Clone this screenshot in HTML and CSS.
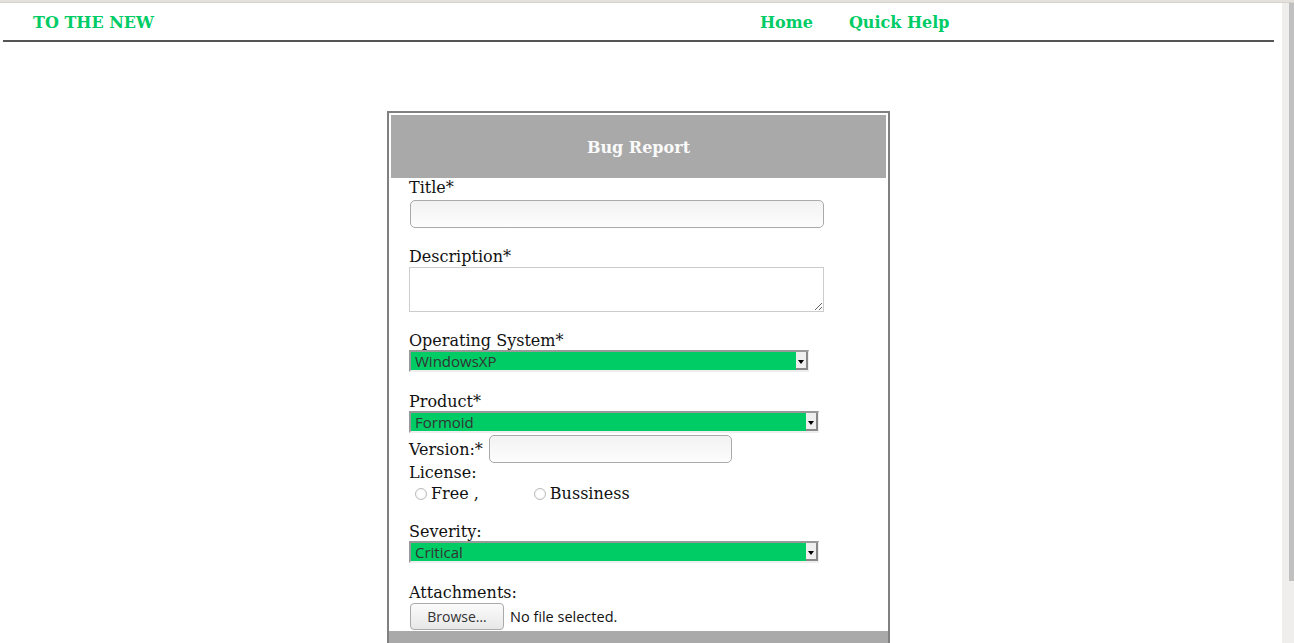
FILE: index.html
```html
<!DOCTYPE html>
<html lang="en">
<head>
<meta charset="utf-8">
<title>Bug Report</title>
<link rel="stylesheet" href="styles.css">
</head>
<body>
<div class="chrome-top"></div>
<div class="viewport">
  <div class="page">
    <header class="topbar">
      <a class="brand" href="#">TO THE NEW</a>
      <nav class="nav">
        <a href="#">Home</a>
        <a href="#">Quick Help</a>
      </nav>
    </header>
    <main class="main">
      <form class="card">
        <h2 class="card-title">Bug Report</h2>
        <div class="card-body">
          <div class="group first">
            <label class="label">Title*</label>
            <input class="text-input title-input" type="text">
          </div>
          <div class="group">
            <label class="label">Description*</label>
            <textarea class="textarea"></textarea>
          </div>
          <div class="group">
            <label class="label">Operating System*</label>
            <div class="select narrow"><span class="select-value">WindowsXP</span><span class="select-arrow"></span></div>
          </div>
          <div class="group wide-gap">
            <label class="label">Product*</label>
            <div class="select"><span class="select-value">Formoid</span><span class="select-arrow"></span></div>
            <div class="version-row">
              <label class="label inline">Version:*</label>
              <input class="text-input version-input" type="text">
            </div>
            <label class="label">License:</label>
            <div class="radio-row">
              <input class="radio" type="radio" name="lic"><span class="radio-text">Free ,</span>
              <input class="radio second" type="radio" name="lic"><span class="radio-text">Bussiness</span>
            </div>
          </div>
          <div class="group">
            <label class="label">Severity:</label>
            <div class="select"><span class="select-value">Critical</span><span class="select-arrow"></span></div>
          </div>
          <div class="group wide-gap">
            <label class="label">Attachments:</label>
            <div class="file-row">
              <button class="browse" type="button">Browse…</button>
              <span class="file-text">No file selected.</span>
            </div>
          </div>
        </div>
        <div class="card-foot"></div>
      </form>
    </main>
  </div>
  <div class="scrollbar"><div class="thumb"></div></div>
</div>
</body>
</html>
```

FILE: styles.css
```css
* { box-sizing: border-box; }
html, body {
  margin: 0;
  padding: 0;
  height: 643px;
  overflow: hidden;
  background: #fff;
  font-family: "DejaVu Serif", serif;
  font-size: 16px;
  color: #111;
}
.chrome-top {
  height: 3px;
  background: #e4e1dd;
  border-bottom: 1px solid #d6d3cf;
}
.viewport {
  display: flex;
  height: 640px;
}
.page {
  flex: 0 0 1282px;
  overflow: hidden;
}
.scrollbar {
  flex: 0 0 12px;
  background: #f0eeec;
  display: flex;
  justify-content: flex-end;
}
.thumb {
  width: 5px;
  height: 578px;
  background: #c0c0c0;
}
.topbar {
  margin-left: 3px;
  width: 1271px;
  height: 39px;
  padding-top: 2px;
  border-bottom: 2px solid #555;
  display: flex;
  align-items: center;
}
.brand {
  flex: 0 0 758px;
  padding-left: 30px;
  color: #00cc66;
  font-weight: bold;
  font-size: 16px;
  text-decoration: none;
}
.nav {
  display: flex;
  gap: 36px;
  margin-left: -1px;
}
.nav a {
  color: #00cc66;
  font-weight: bold;
  font-size: 16px;
  text-decoration: none;
}
.main {
  margin-left: 3px;
  width: 1271px;
  padding-top: 69px;
}
.card {
  display: block;
  margin: 0 auto;
  width: 503px;
  border: 2px solid #808080;
  border-bottom: none;
}
.card-title {
  margin: 2px 2px 0;
  height: 63px;
  line-height: 63px;
  padding-top: 1px;
  background: #a9a9a9;
  color: #fafafa;
  text-align: center;
  font-size: 16px;
  font-weight: bold;
}
.card-body {
  padding: 0 20px 1px;
}
.group { margin-top: 19px; }
.group.wide-gap { margin-top: 20px; }
.group.first { margin-top: 0; }
.label {
  display: block;
  line-height: 19px;
  height: 19px;
}
.label.inline { display: inline-block; }
.text-input {
  display: block;
  border: 1px solid #aaa;
  border-radius: 5px;
  background: linear-gradient(to bottom, #f2f2f2, #fdfdfd);
  height: 28px;
  margin: 0;
}
.title-input {
  width: 414px;
  margin: 3px 0 0 1px;
}
.textarea {
  display: block;
  width: 415px;
  height: 45px;
  margin: 1px 0 0;
  border: 1px solid #ccc;
  border-radius: 0;
  background: #fff;
}
.select {
  display: flex;
  width: 410px;
  height: 22px;
  border-style: solid;
  border-width: 2px 1px 2px 2px;
  border-color: #999 #eee #eee #999;
}
.select.narrow { width: 400px; }
.select-value {
  flex: 1;
  background: #00cc66;
  color: #333;
  font-family: "Open Sans", "DejaVu Sans", sans-serif;
  font-size: 15px;
  line-height: 19px;
  padding-left: 4px;
}
.select-arrow {
  flex: 0 0 12px;
  background: #eeeeee;
  border-right: 2px solid #888;
  border-bottom: 2px solid #888;
  display: flex;
  align-items: center;
  justify-content: center;
}
.select-arrow::after {
  content: "";
  border-left: 3px solid transparent;
  border-right: 3px solid transparent;
  border-top: 4px solid #000;
  margin-top: 3px;
}
.version-row {
  display: flex;
  align-items: center;
  gap: 6px;
  margin-top: 2px;
  height: 28px;
}
.version-input {
  width: 243px;
}
.radio-row {
  display: flex;
  align-items: center;
  margin-top: 2px;
  height: 19px;
}
.radio {
  appearance: none;
  -webkit-appearance: none;
  width: 12px;
  height: 12px;
  margin: 0 4px 0 6px;
  border: 1px solid #bbb;
  border-radius: 50%;
  background: radial-gradient(circle, #fff 40%, #f0f0f0 100%);
}
.radio.second { margin-left: 55px; }
.file-row {
  display: flex;
  align-items: center;
  margin-top: 1px;
  height: 27px;
}
.browse {
  width: 94px;
  height: 27px;
  margin-left: 1px;
  border: 1px solid #aaa;
  border-radius: 4px;
  background: linear-gradient(to bottom, #fbfbfb, #e7e7e7);
  color: #333;
  font-family: "Open Sans", "DejaVu Sans", sans-serif;
  font-size: 14px;
  padding: 0;
}
.file-text {
  margin-left: 6px;
  font-family: "Open Sans", "DejaVu Sans", sans-serif;
  font-size: 14.5px;
  color: #111;
}
.card-foot {
  height: 40px;
  background: #a9a9a9;
}
```
